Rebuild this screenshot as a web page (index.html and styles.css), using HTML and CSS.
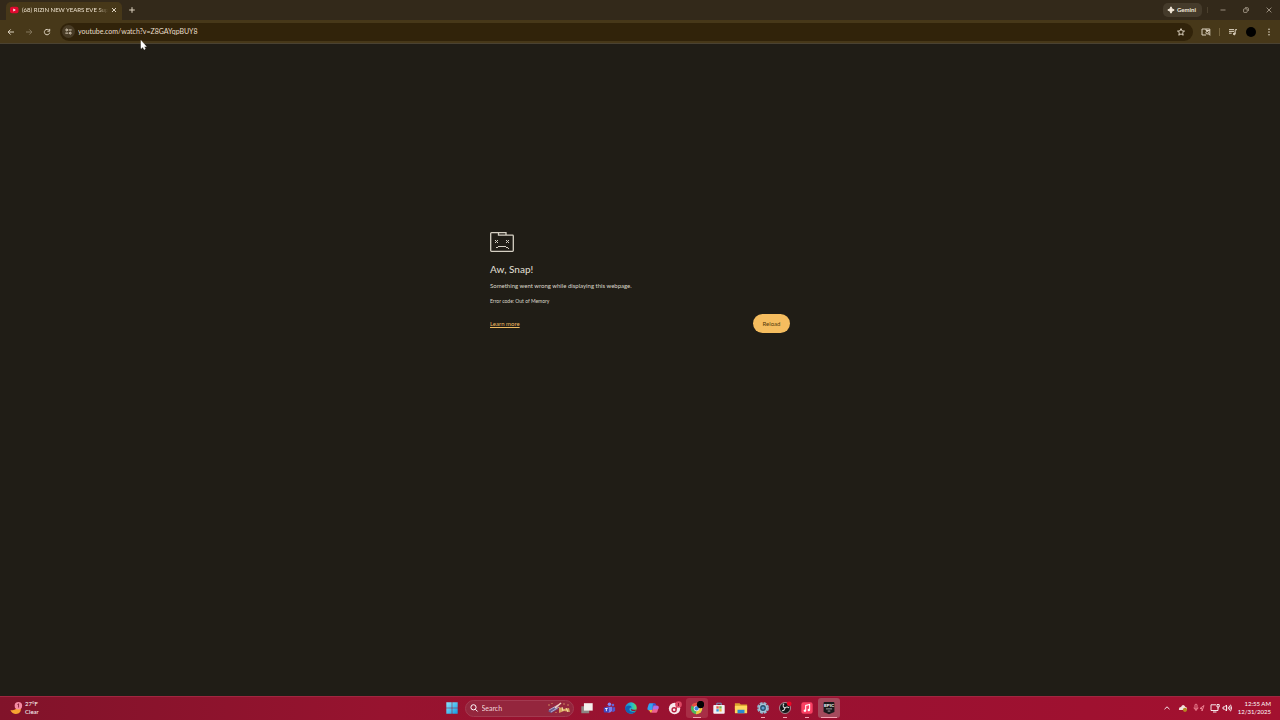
FILE: index.html
```html
<!DOCTYPE html>
<html lang="en">
<head>
<meta charset="utf-8">
<title>Aw, Snap!</title>
<link rel="stylesheet" href="styles.css">
</head>
<body>
<header class="tabstrip">
  <div class="tab">
    <svg class="favicon" viewBox="0 0 10 10"><rect x="1" y="1.8" width="8.5" height="6.5" rx="2" fill="#e0092f"/><path d="M4.300 3.600v3l2.500-1.500z" fill="#fff"/></svg>
    <span class="tab-title">(68) RIZIN NEW YEARS EVE Sup</span>
    <button class="icon-btn tab-close" aria-label="Close tab"><svg viewBox="0 0 10 10"><path d="M3 3l4 4M7 3l-4 4"/></svg></button>
  </div>
  <button class="icon-btn new-tab" aria-label="New tab"><svg viewBox="0 0 10 10"><path d="M5 2.200v5.600M2.200 5h5.600"/></svg></button>
  <button class="gemini"><svg viewBox="0 0 8 8"><path d="M4 .8Q4.400 3.600 7.200 4 4.400 4.400 4 7.200 3.600 4.400.8 4 3.600 3.600 4 .8z" fill="#f3e9da" stroke="#f3e9da"/></svg>Gemini</button>
  <span class="strip-divider"></span>
  <div class="window-controls">
    <button class="icon-btn" aria-label="Minimize"><svg viewBox="0 0 10 10"><path d="M2.500 5h5"/></svg></button>
    <button class="icon-btn" aria-label="Restore"><svg viewBox="0 0 10 10"><rect x="2.600" y="3.800" width="3.600" height="3.600" rx=".7"/><path d="M4 2.700h2.500q.9 0 .9.900V6"/></svg></button>
    <button class="icon-btn" aria-label="Close"><svg viewBox="0 0 10 10"><path d="M2.600 2.600l4.800 4.800M7.400 2.600L2.600 7.400"/></svg></button>
  </div>
</header>

<nav class="toolbar">
  <button class="icon-btn" aria-label="Back"><svg viewBox="0 0 10 10"><path d="M8 5H2.300M4.700 2.400L2.100 5l2.600 2.600"/></svg></button>
  <button class="icon-btn dim" aria-label="Forward"><svg viewBox="0 0 10 10"><path d="M2 5h5.700M5.300 2.400L7.900 5 5.300 7.600"/></svg></button>
  <button class="icon-btn" aria-label="Reload page"><svg viewBox="0 0 10 10"><path d="M7.300 3.600A2.700 2.700 0 1 0 7.700 5.600M7.700 1.900v2.300H5.400"/></svg></button>
  <div class="omnibox">
    <button class="site-info" aria-label="Site information"><svg viewBox="0 0 10 10"><circle cx="3" cy="3.300" r="1"/><path d="M5.200 3.300H8.500M1.500 6.800h3.300"/><circle cx="7" cy="6.800" r="1"/></svg></button>
    <input class="url" type="text" value="youtube.com/watch?v=Z8GAYqpBUY8" aria-label="Address">
    <button class="icon-btn" aria-label="Bookmark"><svg viewBox="0 0 10 10"><path d="M5 1.600l1 2.300 2.500.2-1.900 1.600.6 2.500L5 6.900 2.800 8.200l.6-2.500L1.500 4.100 4 3.900z"/></svg></button>
  </div>
  <button class="icon-btn lens" aria-label="Search this page"><svg viewBox="0 0 10 10"><path d="M5 8H1V2h7.800v6M5 2v1.500h3.800"/><circle cx="6.200" cy="5.700" r="1.300" fill="#473819"/><path d="M7.200 6.700L9 8.500"/></svg></button>
  <span class="bar-divider"></span>
  <button class="icon-btn media" aria-label="Media control"><svg viewBox="0 0 10 10"><path d="M1 2.600h5M1 4.400h5M1 6.200h2.700M7.200 6.800V2.700H9"/><circle cx="6.300" cy="6.900" r=".9" fill="#ddd2bf"/></svg></button>
  <button class="avatar" aria-label="Profile"></button>
  <button class="icon-btn more" aria-label="Menu"><svg viewBox="0 0 10 10"><g fill="#ddd2bf" stroke="none"><circle cx="5" cy="2.200" r=".8"/><circle cx="5" cy="5" r=".8"/><circle cx="5" cy="7.800" r=".8"/></g></svg></button>
</nav>

<main class="page">
  <section class="error">
    <svg class="sad-tab" viewBox="0 0 24 20"><path d="M.7 1.500Q.7.700 1.500.7H16V3.200h6.500q.8 0 .8.800v14.500q0 .8-.8.800h-21q-.8 0-.8-.8zM8.500.7v2.500H16" fill="none" stroke="#d5d0c3" stroke-width="1.300"/><path d="M5 8h1v1H5zM7 8h1v1H7zM6 9h1v1H6zM5 10h1v1H5zM7 10h1v1H7zM16 8h1v1h-1zM18 8h1v1h-1zM17 9h1v1h-1zM16 10h1v1h-1zM18 10h1v1h-1zM8 14h8v1H8zM6 15h2v1H6zM16 15h2v1h-2zM18 16h1v1h-1z" fill="#d5d0c3"/></svg>
    <h1>Aw, Snap!</h1>
    <p class="message">Something went wrong while displaying this webpage.</p>
    <p class="code">Error code: Out of Memory</p>
    <div class="actions">
      <a href="#">Learn more</a>
      <button class="reload">Reload</button>
    </div>
  </section>
</main>

<footer class="taskbar">
  <button class="weather">
    <svg viewBox="0 0 16 16"><path d="M9 3C9.500 8.500 6 10.500 1.500 9.500 3 14 9 15.500 12 11.500 13.500 9 12.500 5 9 3z" fill="#f7a531"/><circle cx="10" cy="5" r="4" fill="#f58ba4"/><path d="M9 3.800l1.200-.8v4" fill="none" stroke="#7b1730" stroke-width=".9"/></svg>
    <span>27°F<br>Clear</span>
  </button>
  <div class="apps">
    <button class="app" aria-label="Start"><svg viewBox="0 0 16 16"><defs><linearGradient id="win" x2="1" y2="1"><stop stop-color="#8be6fc"/><stop offset="1" stop-color="#1599e2"/></linearGradient></defs><path d="M1.500 1.500h6.200v6.200H1.500zM8.300 1.500h6.200v6.200H8.300zM1.500 8.300h6.200v6.200H1.500zM8.300 8.300h6.200v6.200H8.300z" fill="url(#win)"/></svg></button>
    <label class="search">
      <svg class="search-icon" viewBox="0 0 10 10"><circle cx="4.500" cy="4.300" r="2.600"/><path d="M6.400 6.300l2.200 2.200"/></svg>
      <input type="text" placeholder="Search" aria-label="Search">
      <svg class="party" viewBox="0 0 26 12"><path d="M2 9l8-5 2 3-7 4z" fill="#685e91"/><path d="M3 8l9-5M5 10l8-5" stroke="#b9a8ca"/><path d="M9 6l6-5" stroke="#f4d4c1" stroke-width="1.500"/><path d="M13 5l5 2 5-1 1 4-6-1-5 2z" fill="#d6a35e"/><path d="M16 5l1 4M20 6l2 4" stroke="#fae2ac"/><g fill="#e4a76a"><circle cx="3" cy="3" r=".7"/><circle cx="6" cy="1.500" r=".6"/><circle cx="18" cy="2" r=".7"/><circle cx="22" cy="3" r=".7"/><circle cx="10" cy="10.500" r=".6"/></g></svg>
    </label>
    <button class="app" aria-label="Task view"><svg viewBox="0 0 16 16"><path d="M1.500 6h9v8h-9z" fill="#8d8583"/><path d="M4.500 2.500h10v8.500h-10z" fill="#f4efec"/></svg></button>
    <button class="app" aria-label="Teams"><svg viewBox="0 0 16 16"><circle cx="8.500" cy="3.800" r="2" fill="#8289f4"/><circle cx="12.500" cy="4.700" r="1.500" fill="#6265d8"/><path d="M5 6.500h6.500v4a3.500 3.500 0 0 1-6.500 1z" fill="#7981ef"/><path d="M11.800 7H15v3.500q-.8 2.500-3.200 2z" fill="#5056cc"/><rect x="2" y="7" width="6" height="6" rx="1" fill="#4049bf"/><path d="M3.500 8.600h3M5 8.600v3" stroke="#fff" fill="none"/></svg></button>
    <button class="app" aria-label="Edge"><svg viewBox="0 0 16 16"><defs><linearGradient id="edge" x2="1"><stop stop-color="#1686d5"/><stop offset=".6" stop-color="#26bfcb"/><stop offset="1" stop-color="#65d858"/></linearGradient></defs><circle cx="8" cy="8" r="6.600" fill="url(#edge)"/><path d="M1.400 8C3 4.500 8 4.200 9 7.500c-3-1-4.500 3.500-.5 4.600 2 .5 4 .1 5-.6C10.500 16.500 1.600 15 1.400 8z" fill="#1260b4"/><path d="M8.500 7.500c-1 2 1 3.300 6 2.200-.9 2.600-6.500 2.300-6.600.2z" fill="#921733"/></svg></button>
    <button class="app" aria-label="Copilot"><svg viewBox="0 0 16 16"><path d="M4.500 2.500h5.200L7.200 10.500H3q-2-.3-1.300-2.500L3 4q.5-1.500 1.500-1.500z" fill="#35a0f0"/><path d="M8 2.500h2q1 0 1.300 1.200l.5 1.800H8.500L7.200 9z" fill="#3555d0"/><path d="M11.500 13.500H6.300l2.500-8H13q2 .3 1.300 2.500L13 12q-.5 1.500-1.500 1.500z" fill="#ee5f90"/><path d="M9 5.500h4q2 .3 1.300 2.500l-.5 1.500H7.600z" fill="#b06be6"/><path d="M2.500 10.400h4.800l-1.100 3.100q-1.500 0-1.900-1.500-.3-1.300-1.800-1.600z" fill="#f0bd3c"/></svg></button>
    <button class="app" aria-label="Music"><svg viewBox="0 0 16 16"><circle cx="7.500" cy="8.500" r="6.500" fill="#f7e9ec"/><circle cx="7" cy="10" r="2.300" fill="none" stroke="#b71f3e" stroke-width="1.600"/><path d="M9.300 10L10.500 5" stroke="#b71f3e"/><circle cx="12" cy="4" r="3.800" fill="#dc4863"/><path d="M12 2.300v3.400" stroke="#78152e"/></svg></button>
    <button class="app open" aria-label="Chrome"><svg viewBox="0 0 16 16"><circle cx="7.500" cy="8.500" r="6.500" fill="#4fb85b"/><path d="M1.700 5.500A6.500 6.500 0 0 1 14 8H7.500z" fill="#e94d43"/><path d="M8 8h6a6.500 6.500 0 0 1-6.500 7l-.8-.1z" fill="#f4c640"/><circle cx="7.500" cy="8.500" r="3.200" fill="#f4efec"/><circle cx="7.500" cy="8.500" r="2.400" fill="#3d83de"/><circle cx="12" cy="4" r="4.200" fill="#050304"/></svg></button>
    <button class="app" aria-label="Microsoft Store"><svg viewBox="0 0 16 16"><path d="M5.500 5V2.500h5V5" fill="none" stroke="#60a6d7"/><rect x="1.500" y="4.500" width="13" height="10" rx="1" fill="#f2eef1"/><path d="M5 6h2.700v2.700H5z" fill="#e65b46"/><path d="M8.300 6H11v2.700H8.300z" fill="#79b943"/><path d="M5 9.300h2.700V12H5z" fill="#3599df"/><path d="M8.300 9.300H11V12H8.300z" fill="#eeb735"/></svg></button>
    <button class="app" aria-label="File Explorer"><svg viewBox="0 0 16 16"><path d="M1 2.500h5.300L7.800 4H15v5H1z" fill="#dba32c"/><path d="M1 5.500h14v8.500H1z" fill="#ffd75e"/><path d="M4 10h8v4H4z" fill="#298ad2"/></svg></button>
    <button class="app running" aria-label="Settings"><svg viewBox="0 0 16 16"><circle cx="8" cy="8" r="5.600" fill="none" stroke="#8fb4ca" stroke-width="2.400" stroke-dasharray="3.200 1.200"/><circle cx="8" cy="8" r="5.100" fill="#a4c3d5"/><circle cx="8" cy="8" r="3.300" fill="#28506e"/><circle cx="8" cy="8" r="1.800" fill="#5f9fd0"/></svg></button>
    <button class="app running" aria-label="OBS Studio"><svg viewBox="0 0 16 16"><circle cx="8" cy="8" r="6.300" fill="#171719" stroke="#c3bbc0" stroke-width=".8"/><path d="M7 3.200a2.500 2.500 0 0 0 1.500 4.600M12.500 8a2.500 2.500 0 0 0-4.500.5M4.500 11a2.500 2.500 0 0 0 3-3" fill="none" stroke="#ddd" stroke-width="1.200"/><circle cx="12.800" cy="3.200" r="2.700" fill="#f00724"/></svg></button>
    <button class="app running" aria-label="Apple Music"><svg viewBox="0 0 16 16"><rect x="1.500" y="1.500" width="13" height="13" rx="2.500" fill="#fa3f62"/><path d="M6.500 11V5l4.500-1v6" stroke="#fff" fill="none" stroke-width="1.200"/><circle cx="5.600" cy="11" r="1.400" fill="#fff"/><circle cx="10.100" cy="10.200" r="1.400" fill="#fff"/></svg></button>
    <button class="app active" aria-label="Epic Games"><svg viewBox="0 0 16 16"><path d="M3 1h10q1.200 0 1.200 1.200V12.500L8 15l-6.200-2.500V2.200Q1.800 1 3 1z" fill="#19191b"/><text x="8" y="7" text-anchor="middle" class="epic">EPIC</text><path d="M4.500 9h7M6.500 11.500h3" stroke="#c7c2c4" stroke-width=".9"/></svg></button>
  </div>
  <div class="tray">
    <button class="icon-btn" aria-label="Show hidden icons"><svg viewBox="0 0 10 10"><path d="M2.500 6.200L5 3.800 7.500 6.200"/></svg></button>
    <button class="icon-btn cloud" aria-label="Cloud status"><svg viewBox="0 0 10 10"><path d="M1 7q-.5-3 2-3Q5-.1 7.500 4 10 4.500 8.500 7z" fill="#f1e4dc" stroke="none"/><circle cx="7" cy="6.800" r="2.100" fill="#b88921" stroke="none"/></svg></button>
    <button class="icon-btn mic" aria-label="Microphone and location"><svg viewBox="0 0 12 10"><path d="M2 2v2.500q0 1 1 1t1-1V2q0-.8-1-.8T2 2zM1 4.500q0 2 2 2t2-2M3 6.500V8M11 2.500l-4 3h2V8z"/></svg></button>
    <button class="icon-btn" aria-label="Network"><svg viewBox="0 0 10 10"><path d="M6 1.800H1V7.500h7V5M3 9h3.500M7 1.500h2.200v2.500H7zM8.100 4v1.500"/></svg></button>
    <button class="icon-btn volume" aria-label="Volume"><svg viewBox="0 0 10 10"><path d="M1 4v2h1.500l2 2V2l-2 2zM6 3.700q1 1.300 0 2.600M7.300 2.700q1.700 2.300 0 4.600M8.500 1.700q2.200 3.300 0 6.600"/></svg></button>
    <button class="clock">12:55 AM<br>12/31/2025</button>
  </div>
</footer>

<svg class="cursor" viewBox="0 0 7 10"><path d="M1 .5v8L2.800 7l1.300 2.500 1.200-.6L4.100 6.500h2.200z" fill="#fff" stroke="#fff" stroke-width=".5"/></svg>
</body>
</html>
```
FILE: styles.css
```css
* { box-sizing: border-box; }

body {
  margin: 0;
  height: 100vh;
  display: flex;
  flex-direction: column;
  background: #201d16;
  color: #ddd2bf;
  font-family: Lato, "Open Sans", sans-serif;
  font-size: 7px;
  line-height: 8px;
}

button, input {
  margin: 0;
  padding: 0;
  border: 0;
  background: none;
  color: inherit;
  font: inherit;
}

svg { display: block; flex: none; }

.icon-btn { width: 10px; height: 10px; flex: none; }
.icon-btn svg { width: 100%; height: 100%; fill: none; stroke: #ddd2bf; stroke-width: 1; }
.dim { opacity: 0.4; }

.tabstrip {
  display: flex;
  align-items: center;
  height: 20px;
  padding: 0 6px;
  background: #33291a;
}
.tab {
  display: flex;
  align-items: center;
  align-self: flex-end;
  width: 116px;
  height: 18px;
  padding: 0 3px 2px;
  border-radius: 5px 5px 0 0;
  background: #473819;
}
.favicon { width: 10px; height: 10px; margin-right: 3px; }
.tab-title {
  flex: 1;
  font-size: 6px;
  white-space: nowrap;
  color: #eee2ce;
  -webkit-mask-image: linear-gradient(to right, #000 88%, transparent);
  mask-image: linear-gradient(to right, #000 88%, transparent);
}
.tab-close { margin-left: 1px; }
.new-tab { margin-left: 5px; }
.gemini {
  display: flex;
  align-items: center;
  gap: 2px;
  height: 14px;
  margin-left: auto;
  padding: 0 6px 0 4px;
  border-radius: 5px;
  background: #453b2b;
  color: #f3e9da;
  font-weight: 700;
  font-size: 6px;
}
.gemini svg { width: 8px; height: 8px; }
.strip-divider { width: 1px; height: 6px; margin: 0 10px 0 5px; background: #4b402e; }
.window-controls { display: flex; gap: 13px; }
.window-controls svg { stroke-width: 0.6; }

.toolbar {
  display: flex;
  align-items: center;
  gap: 8px;
  height: 24px;
  padding: 0 6px;
  background: #473819;
  border-bottom: 1px solid #4a4232;
}
.omnibox {
  flex: 1;
  display: flex;
  align-items: center;
  height: 18px;
  padding: 0 7px 0 2px;
  border-radius: 9px;
  background: #31230a;
}
.site-info { width: 13px; height: 13px; padding: 2px; border-radius: 50%; background: #483b25; }
.site-info svg { width: 9px; height: 9px; fill: none; stroke: #eee2ce; }
.url { flex: 1; min-width: 0; height: 14px; margin-left: 3px; padding-bottom: 1px; color: #e9dec9; }
.bar-divider { width: 1px; height: 8px; background: #74633e; }
.avatar { width: 10px; height: 10px; border-radius: 50%; background: #000; }

.page { flex: 1; padding-top: 188px; }
.error { width: 300px; margin: 0 auto; color: #ddd8cc; }
.sad-tab { width: 24px; height: 20px; }
h1 { margin: 9px 0 0; font-size: 10px; line-height: 16px; font-weight: 500; }
.message { margin: 4px 0 0; font-size: 6px; line-height: 10px; }
.code { margin: 6px 0 0; font-size: 5px; line-height: 8px; }
.actions { display: flex; align-items: center; justify-content: space-between; margin-top: 9px; font-size: 6px; }
.actions a { color: #efbb62; }
.reload {
  width: 37px;
  height: 19px;
  border-radius: 10px;
  background: #f5bd5f;
  color: #553b0b;
}

.taskbar {
  display: grid;
  grid-template-columns: 1fr auto 1fr;
  align-items: center;
  height: 24px;
  padding: 0 9px 1px;
  background: linear-gradient(to right, #81132a, #97132f 30%, #9b1131 70%, #a3112f);
  border-top: 1px solid #a02640;
  color: #fff;
  font-size: 6px;
}
.weather { display: flex; align-items: center; gap: 1px; justify-self: start; text-align: left; }
.weather svg { width: 15px; height: 15px; }
.apps { display: flex; align-items: center; }
.app {
  position: relative;
  width: 22px;
  height: 20px;
  padding: 3px 4px;
  border-radius: 3px;
}
.app svg { width: 14px; height: 14px; }
.open { background: #a82e46; }
.active { background: #a44a5c; }
.open::after, .running::after, .active::after {
  content: "";
  position: absolute;
  left: 9px;
  right: 9px;
  bottom: 0;
  height: 1px;
  background: #f5a2b2;
}
.open::after { left: 7px; right: 7px; }
.active::after { left: 3px; right: 3px; }
.epic { font: 700 5px "Liberation Sans", sans-serif; fill: #fff; }
.search {
  display: flex;
  align-items: center;
  width: 109px;
  height: 17px;
  margin: 0 2px;
  padding: 0 1px 0 3px;
  border: 1px solid #a23a50;
  border-radius: 9px;
  background: #94263d;
}
.search-icon { width: 10px; height: 10px; fill: none; stroke: #fff; }
.search input { flex: 1; min-width: 0; margin-left: 3px; font-size: 7px; }
.search input::placeholder { color: #eed3d9; opacity: 1; }
.party { width: 26px; height: 12px; fill: none; }
.tray { display: flex; align-items: center; justify-self: end; }
.tray svg { stroke: #fff; stroke-width: 0.9; }
.cloud { margin-left: 6px; }
.mic { width: 12px; margin: 0 5px; }
.tray .mic svg { stroke: #f08a98; }
.volume { margin-left: 2px; }
.clock { margin-left: 6px; text-align: right; }

.cursor { position: absolute; left: 140px; top: 40px; width: 7px; height: 10px; }
```
